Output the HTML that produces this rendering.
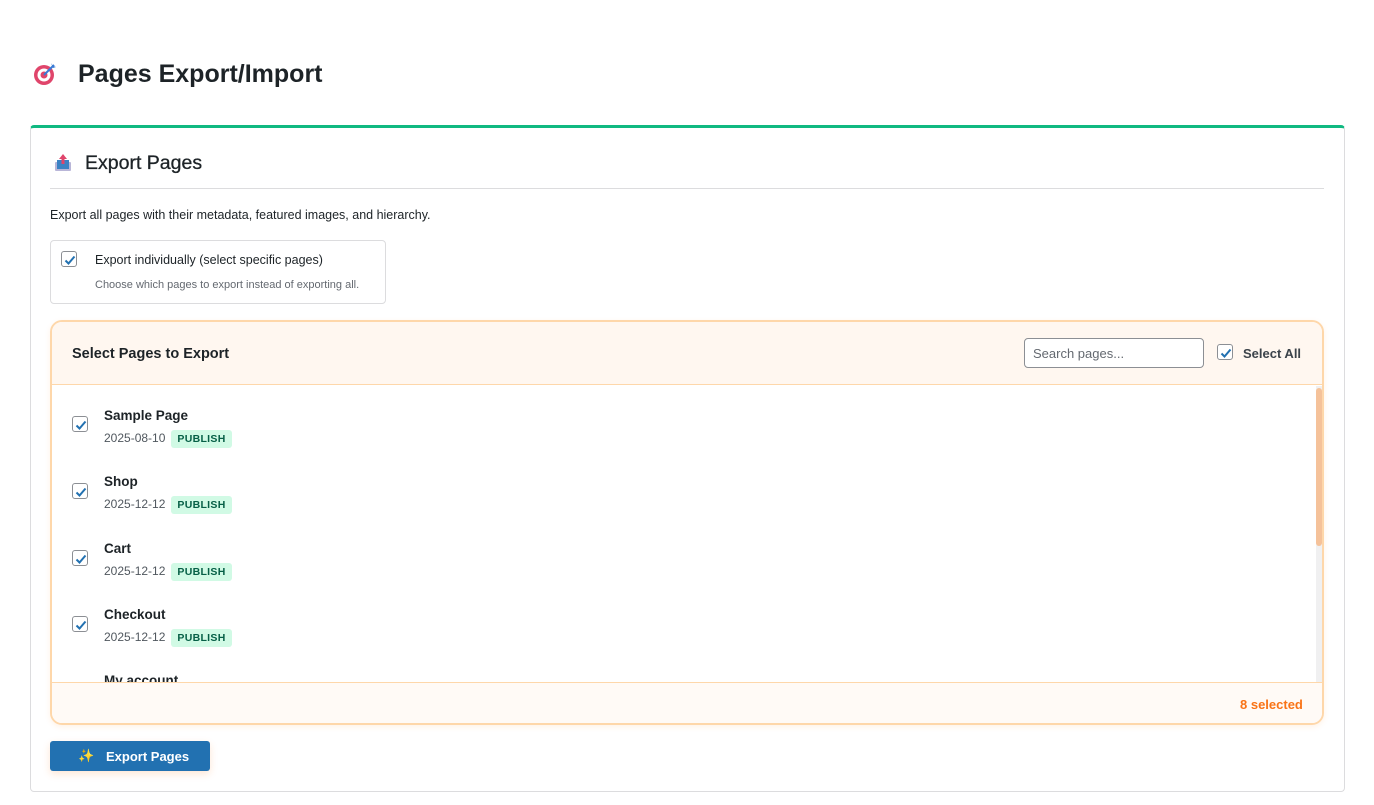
<!DOCTYPE html>
<html><head><meta charset="utf-8"><style>
*{box-sizing:border-box;margin:0;padding:0}
body{width:1374px;height:805px;background:#fff;font-family:"Liberation Sans",sans-serif;color:#1d2327;position:relative;overflow:hidden}
.abs{position:absolute}
h1{position:absolute;left:78px;top:60px;font-size:25px;font-weight:bold;color:#1d2327}
.card{position:absolute;left:30px;top:125px;width:1315px;height:667px;border:1px solid #dcdcde;border-top:3px solid #10b981;border-radius:4px;background:#fff}
.cb{position:absolute;width:16px;height:16px;border:1px solid #8c8f94;border-radius:3px;background:#fff}
.cb svg{position:absolute;left:1px;top:1px}
.badge{display:inline-block;background:#d1fae5;color:#065f46;font-size:10.5px;font-weight:bold;padding:3px 6px;border-radius:3px;margin-left:6px;letter-spacing:.3px}
.item{position:absolute;left:0;width:1260px;height:66px}
.item .t{position:absolute;left:52px;top:22px;font-size:13.5px;font-weight:bold;color:#1d2327}
.item .d{position:absolute;left:52px;top:44px;font-size:12px;color:#50575e}
</style></head><body>
<svg class="abs" style="left:32px;top:61px" width="26" height="26" viewBox="0 0 26 26"><circle cx="12" cy="14" r="10" fill="#e0456b"/><circle cx="12" cy="14" r="6.5" fill="#fff"/><circle cx="12" cy="14" r="3.5" fill="#e0456b"/><line x1="12" y1="14" x2="22" y2="4" stroke="#3a7bd5" stroke-width="2"/><path d="M19 2l2 3 3 1-3 1z" fill="#3a7bd5"/></svg>
<h1>Pages Export/Import</h1>
<div class="card"></div>
<svg class="abs" style="left:54px;top:153px" width="18" height="19" viewBox="0 0 18 19"><rect x="1" y="9" width="16" height="9" rx="1" fill="#b9b6d8"/><rect x="3" y="7" width="12" height="9" fill="#3b82c4"/><path d="M9 1l4 5h-2.5v5h-3V6H5z" fill="#e0456b"/></svg>
<div class="abs" style="left:85px;top:152px;font-size:19.5px;color:#1d2327;-webkit-text-stroke:0.3px #1d2327">Export Pages</div>
<div class="abs" style="left:50px;top:188px;width:1274px;height:1px;background:#dcdcde"></div>
<div class="abs" style="left:50px;top:208px;font-size:12.5px;color:#1d2327">Export all pages with their metadata, featured images, and hierarchy.</div>
<div class="abs" style="left:50px;top:240px;width:336px;height:64px;border:1px solid #dcdcde;border-radius:4px"></div>
<div class="cb" style="left:61px;top:251px"><svg width="14" height="14" viewBox="0 0 14 14"><path d="M2.5 7.5l3 3 6-7" fill="none" stroke="#2271b1" stroke-width="2"/></svg></div>
<div class="abs" style="left:95px;top:253px;font-size:12.5px;color:#1d2327">Export individually (select specific pages)</div>
<div class="abs" style="left:95px;top:279px;font-size:11px;color:#646970">Choose which pages to export instead of exporting all.</div>

<div class="abs" style="left:50px;top:320px;width:1274px;height:405px;border:2px solid #fed7aa;border-radius:12px;overflow:hidden;box-shadow:0 2px 6px rgba(251,146,60,.12)">
 <div class="abs" style="left:0;top:0;width:1270px;height:63px;background:#fff7f0;border-bottom:1px solid #fed7aa"></div>
 <div class="abs" style="left:20px;top:24px;font-size:14.5px;font-weight:bold;color:#1d2327">Select Pages to Export</div>
 <div class="abs" style="left:972px;top:16px;width:180px;height:30px;border:1px solid #8c8f94;border-radius:4px;background:#fff;font-size:13px;color:#646970;padding:7px 8px">Search pages...</div>
 <div class="cb" style="left:1165px;top:22px"><svg width="14" height="14" viewBox="0 0 14 14"><path d="M2.5 7.5l3 3 6-7" fill="none" stroke="#2271b1" stroke-width="2"/></svg></div>
 <div class="abs" style="left:1191px;top:24px;font-size:13px;font-weight:bold;color:#3c434a">Select All</div>
 <div class="abs" style="left:0;top:64px;width:1270px;height:296px;overflow:hidden">
  <div class="item" style="top:0px"><div class="cb" style="left:20px;top:30px"><svg width="14" height="14" viewBox="0 0 14 14"><path d="M2.5 7.5l3 3 6-7" fill="none" stroke="#2271b1" stroke-width="2"/></svg></div><div class="t">Sample Page</div><div class="d">2025-08-10<span class="badge">PUBLISH</span></div></div>
  <div class="item" style="top:66px"><div class="cb" style="left:20px;top:31px"><svg width="14" height="14" viewBox="0 0 14 14"><path d="M2.5 7.5l3 3 6-7" fill="none" stroke="#2271b1" stroke-width="2"/></svg></div><div class="t">Shop</div><div class="d">2025-12-12<span class="badge">PUBLISH</span></div></div>
  <div class="item" style="top:133px"><div class="cb" style="left:20px;top:31px"><svg width="14" height="14" viewBox="0 0 14 14"><path d="M2.5 7.5l3 3 6-7" fill="none" stroke="#2271b1" stroke-width="2"/></svg></div><div class="t">Cart</div><div class="d">2025-12-12<span class="badge">PUBLISH</span></div></div>
  <div class="item" style="top:199px"><div class="cb" style="left:20px;top:31px"><svg width="14" height="14" viewBox="0 0 14 14"><path d="M2.5 7.5l3 3 6-7" fill="none" stroke="#2271b1" stroke-width="2"/></svg></div><div class="t">Checkout</div><div class="d">2025-12-12<span class="badge">PUBLISH</span></div></div>
  <div class="item" style="top:265px"><div class="t">My account</div></div>
  <div class="abs" style="left:1264px;top:0;width:6px;height:296px;background:#f0f0f1"></div>
  <div class="abs" style="left:1264px;top:2px;width:6px;height:158px;background:#f5c29a;border-radius:3px"></div>
 </div>
 <div class="abs" style="left:0;top:360px;width:1270px;height:41px;background:#fffaf6;border-top:1px solid #fed7aa"></div>
 <div class="abs" style="left:1188px;top:375px;font-size:13px;font-weight:bold;color:#f97316">8 selected</div>
</div>

<div class="abs" style="left:50px;top:741px;width:160px;height:30px;background:#2271b1;border-radius:3px;box-shadow:0 3px 8px rgba(249,115,22,.18)"></div>
<div class="abs" style="left:78px;top:748px;font-size:13px;color:#f5b041">✨</div>
<div class="abs" style="left:106px;top:749px;font-size:13px;font-weight:bold;color:#fff">Export Pages</div>
</body></html>
